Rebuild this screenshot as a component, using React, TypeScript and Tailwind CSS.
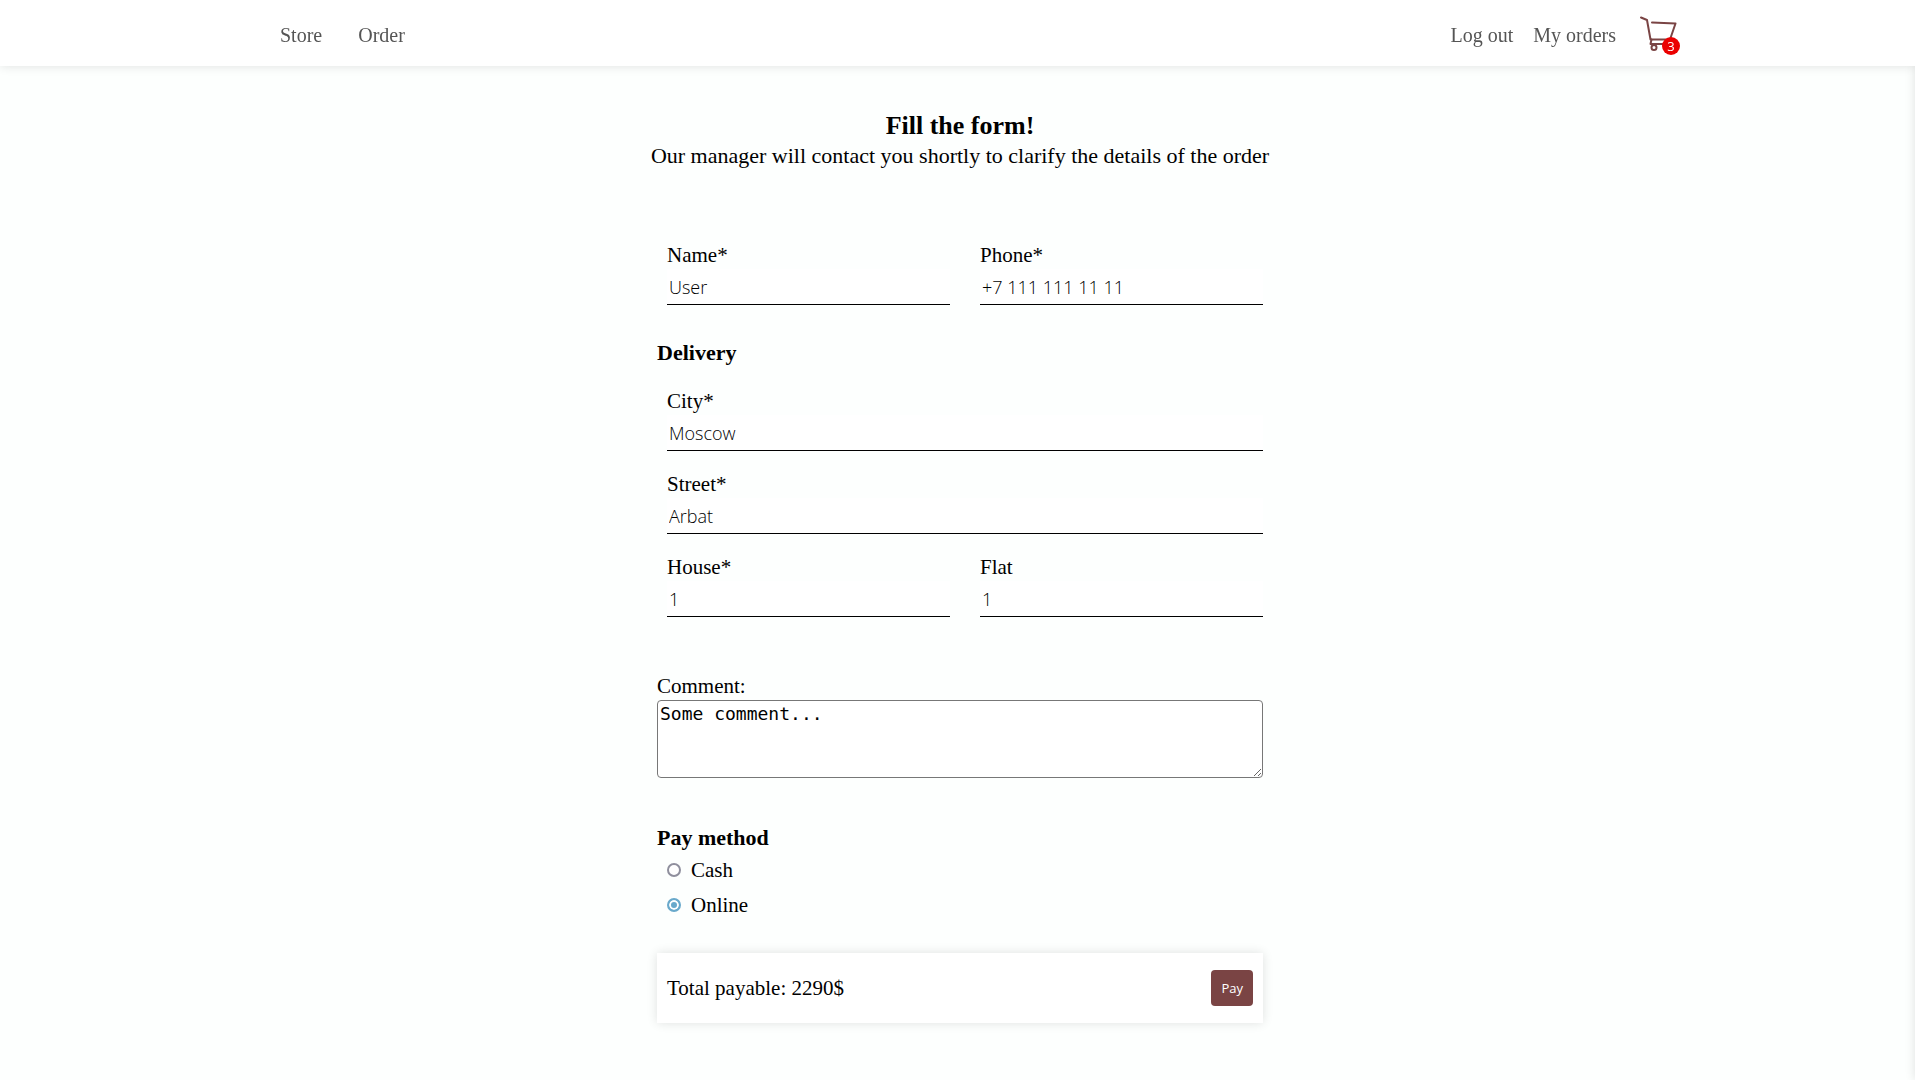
import type { ReactNode } from "react";

function Field({ id, label, value, type = "text" }: { id: string; label: string; value: string; type?: string }) {
  return (
    <div className="flex min-w-0 flex-1 flex-col">
      <label htmlFor={id} className="h-7">
        {label}
      </label>
      <input
        id={id}
        type={type}
        defaultValue={value}
        className="h-9 w-full border-b border-black bg-white px-0.5 font-['Open_Sans',sans-serif] text-[18px] font-light outline-none"
      />
    </div>
  );
}

function PayOption({ id, label, checked = false }: { id: string; label: string; checked?: boolean }) {
  return (
    <div className="flex h-[35px] items-center gap-2.5">
      <input
        id={id}
        type="radio"
        name="pay"
        defaultChecked={checked}
        className="size-3.5 appearance-none rounded-full border-2 border-[#8f8f9d] bg-white checked:border-[#69a9cb] checked:bg-[#69a9cb] checked:shadow-[inset_0_0_0_2px_white]"
      />
      <label htmlFor={id}>{label}</label>
    </div>
  );
}

function NavLink({ children }: { children: ReactNode }) {
  return (
    <a href="#" className="pt-1 hover:underline">
      {children}
    </a>
  );
}

function Cart() {
  return (
    <a href="#" aria-label="Cart" className="relative ml-1 block h-10 w-10">
      <svg viewBox="0 0 40 40" className="size-10" fill="none" stroke="#7a4444" strokeWidth="2" strokeLinecap="round" strokeLinejoin="round">
        <path d="M1 4.5 L7 7 L10.5 26.5 H30 L35.5 10.5 L12 9.5" />
        <path d="M11.5 26.5 L10.5 31 H28" />
        <circle cx="14" cy="34.5" r="2.5" />
        <circle cx="28" cy="34.5" r="2.5" />
      </svg>
      <span className="absolute right-0 -bottom-0.5 flex size-[18px] items-center justify-center rounded-full bg-[#eb0000] font-['Open_Sans',sans-serif] text-[13px] leading-none text-white">
        3
      </span>
    </a>
  );
}

export default function App() {
  return (
    <div className="min-h-screen bg-[#fdfffe] font-['Liberation_Serif',serif] text-[21px] leading-7 text-black">
      <header className="relative z-10 bg-white pl-[5px] shadow-[0_0_10px_rgba(0,0,0,0.12)]">
        <div className="mx-auto flex h-[66px] max-w-[1440px] items-center justify-between pl-10 text-[20px] text-[#555]">
          <nav className="flex gap-9">
            <NavLink>Store</NavLink>
            <NavLink>Order</NavLink>
          </nav>
          <nav className="flex items-center gap-5">
            <NavLink>Log out</NavLink>
            <NavLink>My orders</NavLink>
            <Cart />
          </nav>
        </div>
      </header>

      {/* Closed side drawer; only its shadow reaches the window's edge */}
      <div aria-hidden="true" className="fixed top-0 left-full h-full w-80 bg-white shadow-[0_0_10px_rgba(0,0,0,0.12)]" />

      <main className="pl-[5px]">
        <form className="mx-auto flex max-w-[606px] flex-col pt-11 pb-14">
          <div className="flex flex-col items-center text-center whitespace-nowrap">
            <h1 className="text-[26px] leading-8 font-bold">Fill the form!</h1>
            <p className="-mx-4 text-[22px] leading-7">Our manager will contact you shortly to clarify the details of the order</p>
          </div>

          <div className="mt-[71px] flex gap-[30px] pl-2.5">
            <Field id="name" label="Name*" value="User" />
            <Field id="phone" label="Phone*" value="+7 111 111 11 11" type="tel" />
          </div>

          <h2 className="mt-[34px] text-[22px] font-bold">Delivery</h2>
          <div className="mt-5 flex flex-col gap-[19px] pl-2.5">
            <Field id="city" label="City*" value="Moscow" />
            <Field id="street" label="Street*" value="Arbat" />
            <div className="flex gap-[30px]">
              <Field id="house" label="House*" value="1" />
              <Field id="flat" label="Flat" value="1" />
            </div>
          </div>

          <label htmlFor="comment" className="mt-[55px]">
            Comment:
          </label>
          <textarea
            id="comment"
            defaultValue="Some comment..."
            className="h-[78px] w-full rounded border border-[#777] bg-white px-0.5 pt-px font-['DejaVu_Sans_Mono',monospace] text-[18px] leading-6 outline-none"
          />

          <h2 className="mt-[46px] text-[22px] font-bold">Pay method</h2>
          <div className="flex flex-col pl-2.5">
            <PayOption id="cash" label="Cash" />
            <PayOption id="online" label="Online" checked />
          </div>

          <div className="mt-[31px] flex h-[70px] items-center justify-between bg-white px-2.5 shadow-[0_0_10px_rgba(0,0,0,0.12)]">
            <p>Total payable: 2290$</p>
            <button type="button" className="h-9 rounded bg-[#7a4444] px-2.5 font-['Open_Sans',sans-serif] text-[13px] leading-none text-white">
              Pay
            </button>
          </div>
        </form>
      </main>
    </div>
  );
}
